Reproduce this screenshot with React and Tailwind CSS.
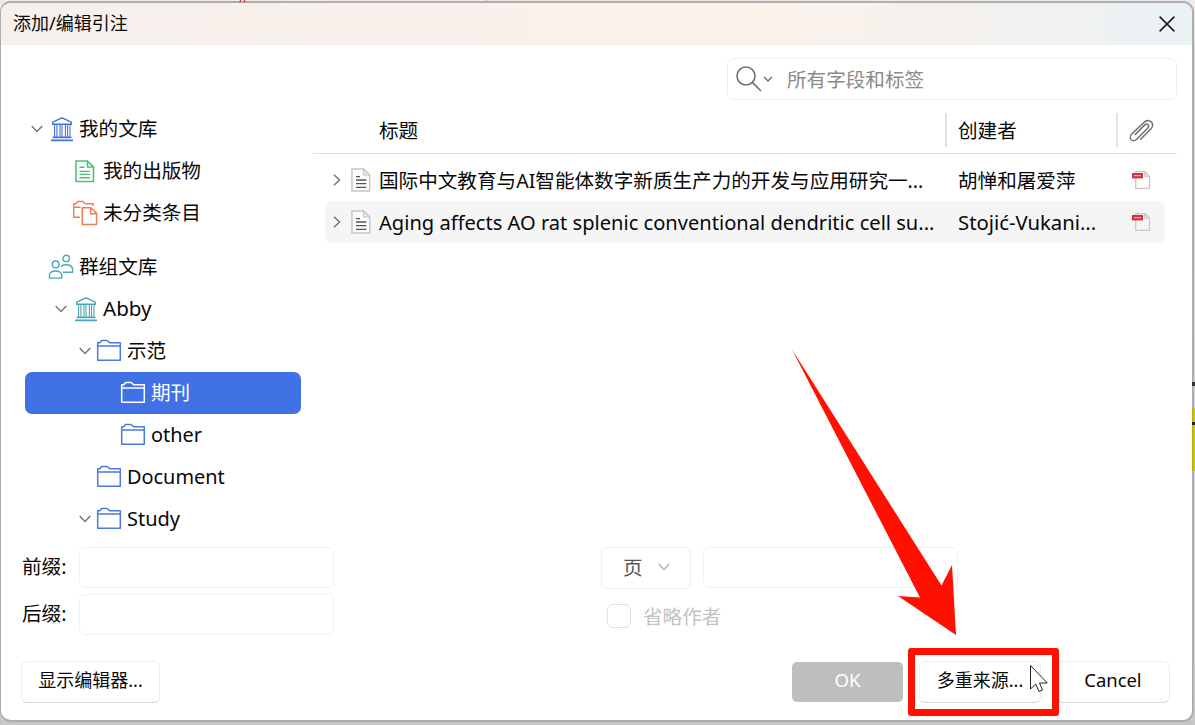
import React from "react";

const Chevron = ({ className = "" }) => (
  <svg width="12" height="8" viewBox="0 0 12 8" fill="none" className={className}>
    <path d="M0.7 1 L6 6.5 L11.3 1" stroke="currentColor" strokeWidth="1.5" />
  </svg>
);

const Library = ({ color }) => (
  <svg width="24" height="26" viewBox="0 0 24 26" fill="none" stroke={color} strokeWidth="1.4">
    <path d="M2.7 8.2V6.2L12 1.8L21.3 6.2V8.2Z" />
    <path d="M4.6 8.5v13M6.9 8.5v13M10 8.5v13M12 8.5v13M15.4 8.5v13M17.6 8.5v13M20 8.5v13" strokeWidth="1.1" />
    <path d="M2.6 21.4H21.4M1 24.4H23" strokeWidth="1.6" />
  </svg>
);

const Folder = ({ color }) => (
  <svg width="26" height="24" viewBox="0 0 26 24" fill="none" stroke={color} strokeWidth="1.5" strokeLinejoin="round" className="-ml-[2px]">
    <path d="M1.7 6.9V3.7H3.8L5.5 1.5H11L13.7 3.7H24.3V6.9" />
    <path d="M1.7 6.9H24.3V21.3H1.7Z" />
  </svg>
);

const GreenDoc = () => (
  <svg width="20" height="23" viewBox="0 0 20 23" fill="none" stroke="#4fbd78" strokeWidth="1.6" strokeLinejoin="round" className="ml-[1px]">
    <path d="M1 1H12.5L18.5 7V21.5H1ZM12.5 1V7H18.5" />
    <path d="M4.5 7.3H9.5M4.5 11.4H15M4.5 14.4H15M4.5 17.7H15" strokeWidth="1.4" />
  </svg>
);

const Unfiled = () => (
  <svg width="26" height="26" viewBox="0 0 26 26" fill="none" stroke="#ee7f55" strokeWidth="1.5" strokeLinejoin="round" className="-ml-[2px]">
    <path d="M8 17.3H1.7V3.7H4L5.7 1.5H11L13.3 3.7H21V6M1.7 7.2H8.5" />
    <path d="M10.3 7.8H19L24.6 13.4V24.4H10.3ZM18.6 8V13.8H24.4" />
  </svg>
);

const Groups = () => (
  <svg width="26" height="26" viewBox="0 0 26 26" fill="none" stroke="#4ba8b8" strokeWidth="1.4" strokeLinejoin="round" className="-ml-[2px]">
    <circle cx="18.2" cy="4.4" r="3.2" />
    <circle cx="7.6" cy="10.4" r="3.4" />
    <path d="M1.4 24.1V21.9C1.4 18.9 4 17 7.6 17S13.8 18.9 13.8 21.9V24.1Z" />
    <path d="M13 12.8C14.1 11.4 15.8 10.8 18 10.8C21.9 10.8 24.6 12.8 24.6 16V18.2H14.8" />
  </svg>
);

const ItemDoc = () => (
  <svg width="20" height="24" viewBox="0 0 20 24" fill="none">
    <path d="M1 1H12.5L18.7 7V23H1Z" fill="#fdfdfd" stroke="#c6c6c6" strokeWidth="1.5" />
    <path d="M12.5 1V7H18.7Z" fill="#ececec" stroke="#c6c6c6" strokeWidth="1.2" />
    <path d="M5 8.6H9M5 12H15.3M5 15.6H15.3M5 19.4H15.3" stroke="#565656" strokeWidth="1.4" />
  </svg>
);

const Pdf = () => (
  <svg width="20" height="20" viewBox="0 0 20 20" fill="none">
    <path d="M3.7 8V18.3H17.5V6.3L13 1.6H3.7V3" fill="none" stroke="#c8c8c8" strokeWidth="1.3" />
    <path d="M12.6 1.5V6.5H17.5Z" fill="#e3e3e3" stroke="#c8c8c8" />
    <rect x="0" y="3" width="11" height="5.4" fill="#d2303e" />
    <path d="M2 5.7H9" stroke="#f2a9ae" strokeWidth="1.3" />
  </svg>
);

function TreeRow({ pad, open, icon, label, selected, className = "" }) {
  return (
    <div className={"flex h-[42px] items-center rounded-[7px] " + (selected ? "bg-[#4072e5] text-white " : "") + pad}>
      <span className="flex w-[24px] shrink-0 items-center">{open && <Chevron className="ml-[2px] text-[#777]" />}</span>
      <span className="-ml-[3px] flex w-[32px] shrink-0 items-center justify-start">{icon}</span>
      <span className={"-ml-[3px] whitespace-nowrap " + className}>{label}</span>
    </div>
  );
}

function ItemRow({ title, creator, shaded, titleClass = "", creatorClass = "pt-[2px]" }) {
  return (
    <div className={"ml-[12px] flex h-[42px] w-[840px] items-center rounded-[7px] " + (shaded ? "bg-[#f5f5f5]" : "")}>
      <span className="flex w-[26px] shrink-0 items-center pl-[6px]">
        <Chevron className="-rotate-90 text-[#777]" />
      </span>
      <span className="w-[28px] shrink-0">
        <ItemDoc />
      </span>
      <span className={"w-[579px] shrink-0 whitespace-nowrap pt-[2px] " + titleClass}>{title}</span>
      <span className={"w-[174px] shrink-0 whitespace-nowrap " + creatorClass}>{creator}</span>
      <Pdf />
    </div>
  );
}

export default function App() {
  return (
    <div className="relative h-[725px] w-[1195px] overflow-hidden bg-[linear-gradient(#efebe9_0px,#e5e5e5_40px,#dadada_50px,#d5d5d5_700px,#c6c6c6_722px)] font-['Noto_Sans','Noto_Sans_CJK_SC',sans-serif] text-[19.6px] text-[#080808]">
      <div className="flex h-full w-full pb-[3px] pr-[1px] pt-[1px]">
        <div className="flex w-full flex-col overflow-hidden rounded-[11px] border-y-2 border-l border-r-2 border-[#adadad] bg-white">
          <header className="flex h-[42px] shrink-0 items-center justify-between bg-[linear-gradient(90deg,#f6efec_0%,#fbf1eb_45%,#fbf1eb_65%,#f5f1ee_80%,#eef1f3_94%,#eaf2f5_100%)] pl-[12px] pr-[17px]">
            <h1 className="pb-[2px] text-[18px] leading-[24px]">添加/编辑引注</h1>
            <svg width="16" height="16" viewBox="0 0 16 16" stroke="#151a1e" strokeWidth="1.5" fill="none">
              <path d="M0.6 0.6L15.4 15.4M15.4 0.6L0.6 15.4" />
            </svg>
          </header>

          <div className="flex shrink-0 justify-end pr-[15px] pt-[13px]">
            <div className="flex h-[42px] w-[450px] items-center rounded-[6px] border border-[#f0f0f0] pl-[8px] text-[#8b8b8b]">
              <svg width="26" height="26" viewBox="0 0 26 26" fill="none" stroke="#717171" strokeWidth="1.6">
                <circle cx="10" cy="10" r="9" />
                <path d="M16.4 16.4L25 25" />
              </svg>
              <svg width="10" height="7" viewBox="0 0 10 7" fill="none" className="ml-[1px]">
                <path d="M1 1L5 5L9 1" stroke="#717171" strokeWidth="1.5" />
              </svg>
              <span className="ml-[14px] pt-[2px]">所有字段和标签</span>
            </div>
          </div>

          <div className="flex h-[440px] shrink-0">
            <nav className="ml-[24px] w-[276px] shrink-0 pt-[8px]">
              <TreeRow pad="pl-[4px]" open icon={<Library color="#4472dd" />} label="我的文库" />
              <TreeRow pad="pl-[28px]" icon={<GreenDoc />} label="我的出版物" />
              <TreeRow pad="pl-[28px]" icon={<Unfiled />} label="未分类条目" />
              <div className="h-[12px]" />
              <TreeRow pad="pl-[4px]" icon={<Groups />} label="群组文库" />
              <TreeRow pad="pl-[28px]" open icon={<Library color="#4ba8b8" />} label="Abby" className="pb-[2px] text-[20.6px]" />
              <TreeRow pad="pl-[52px]" open icon={<Folder color="#4c78df" />} label="示范" />
              <TreeRow pad="pl-[76px]" selected icon={<Folder color="#ffffff" />} label="期刊" />
              <TreeRow pad="pl-[76px]" icon={<Folder color="#4c78df" />} label="other" className="text-[19.9px]" />
              <TreeRow pad="pl-[52px]" icon={<Folder color="#4c78df" />} label="Document" className="text-[19.9px]" />
              <TreeRow pad="pl-[52px]" open icon={<Folder color="#4c78df" />} label="Study" className="text-[20px]" />
            </nav>

            <section className="ml-[12px] w-[864px] shrink-0">
              <div className="flex h-[54px] items-center border-b border-[#dfdfdf] pt-[7px]">
                <span className="ml-[66px] w-[566px] shrink-0 pt-[2px]">标题</span>
                <span className="flex h-[34px] w-[171px] shrink-0 items-center border-l-2 border-[#e2e2e2] pl-[11px] pt-[2px]">创建者</span>
                <span className="flex h-[34px] items-center border-l-2 border-[#e2e2e2] pl-[11px] pt-[2px]">
                  <svg width="26" height="24" viewBox="0 0 26 24" fill="none" stroke="#707070" strokeWidth="1.5" strokeLinecap="round">
                    <path d="M11.7 20.2L22 9.8C24.2 7.5 24 4.6 22.2 2.9C20.2 1 17.2 1.2 15.2 3.2L3 14.8C1 16.8 .9 19.4 2.2 20.7C3.7 22.2 6.1 21.8 7.7 20.2L18.7 9.2C20 7.8 19.8 6.3 19 5.6C18 4.8 16.6 5 15.5 6.1L6.3 15.5" />
                  </svg>
                </span>
              </div>
              <div className="pt-[5px]">
                <ItemRow title="国际中文教育与AI智能体数字新质生产力的开发与应用研究一..." creator="胡惮和屠爱萍" />
                <ItemRow
                  shaded
                  title="Aging affects AO rat splenic conventional dendritic cell su..."
                  creator="Stojić-Vukani..."
                  titleClass="text-[20.1px]"
                  creatorClass="text-[20.3px]"
                />
              </div>
            </section>
          </div>

          <div className="flex shrink-0 pl-[21px] pt-[7px]">
            <div className="flex w-[579px] shrink-0 flex-col gap-[6px]">
              <label className="flex h-[41px] items-center">
                <span className="w-[57px] pb-[1px]">前缀:</span>
                <span className="h-[41px] w-[255px] rounded-[6px] border border-[#f1f1f1]" />
              </label>
              <label className="flex h-[41px] items-center">
                <span className="w-[57px] pb-[1px]">后缀:</span>
                <span className="h-[41px] w-[255px] rounded-[6px] border border-[#f1f1f1]" />
              </label>
            </div>
            <div className="flex flex-col">
              <div className="flex gap-[12px]">
                <div className="flex h-[42px] w-[90px] items-center rounded-[6px] border border-[#eeeeee] pl-[21px] text-[#555]">
                  <span>页</span>
                  <Chevron className="mb-[2px] ml-[15px] text-[#b5b5b5]" />
                </div>
                <div className="h-[41px] w-[255px] rounded-[6px] border border-[#f1f1f1]" />
              </div>
              <label className="ml-[6px] mt-[15px] flex h-[24px] items-center text-[#c3c3c3]">
                <span className="mr-[12px] h-[24px] w-[24px] rounded-[6px] border-[1.5px] border-[#e0e0e0]" />
                <span className="pt-[2px]">省略作者</span>
              </label>
            </div>
          </div>

          <footer className="flex shrink-0 items-center pl-[20px] pt-[26px] text-[18px]">
            <button className="h-[42px] w-[139px] rounded-[6px] border border-[#ededed] border-b-[#d8d8d8] pb-[3px]">显示编辑器...</button>
            <button className="ml-[632px] h-[40px] w-[111px] rounded-[5px] bg-[#bebebe] pb-[5px] text-[18.6px] text-white">OK</button>
            <button className="ml-[16px] h-[42px] w-[122px] rounded-[6px] border border-[#ededed] border-b-[#d8d8d8] pb-[3px]">多重来源...</button>
            <button className="ml-[16px] h-[42px] w-[113px] rounded-[6px] border border-[#ededed] border-b-[#d8d8d8] pb-[5px] pr-[1px] text-[18.4px]">Cancel</button>
          </footer>
        </div>
      </div>

      <div className="absolute left-[1192px] top-[408px] h-[63px] w-[3px] bg-[#d8d511]" />
      <div className="absolute left-[1192px] top-[408px] h-[63px] w-[2px] bg-[#bfae22]" />
      <div className="absolute left-[1192px] top-[422px] h-[3px] w-[3px] bg-[#222]" />
      <div className="absolute left-[1192px] top-[382px] h-[4px] w-[3px] bg-[#333]" />
      <svg className="absolute left-[238px] top-0" width="10" height="3" viewBox="0 0 10 3">
        <path d="M3 0L1.5 2.5M6.5 0V2.5" stroke="#d13b3b" strokeWidth="1.3" />
      </svg>
      <div className="absolute left-[486px] top-0 h-[1px] w-[1px] bg-[#aaa]" />

      <div className="absolute left-[908px] top-[648px] h-[68px] w-[151px] rounded-[3px] border-[7px] border-[#ff1000]" />
      <svg className="absolute left-[780px] top-[340px]" width="200" height="310" viewBox="0 0 200 310">
        <path d="M12 9.5L161.5 245.5L172 225L176 295L118 256L140 257.5Z" fill="#ff1000" />
      </svg>
      <svg className="absolute left-[1029px] top-[664px]" width="20" height="29" viewBox="0 0 20 29">
        <path d="M1.5 1.5V25L6.7 20L10 27.5L13.5 26L10.5 19H18.3Z" fill="#fff" stroke="#222" strokeWidth="1" />
      </svg>
    </div>
  );
}
